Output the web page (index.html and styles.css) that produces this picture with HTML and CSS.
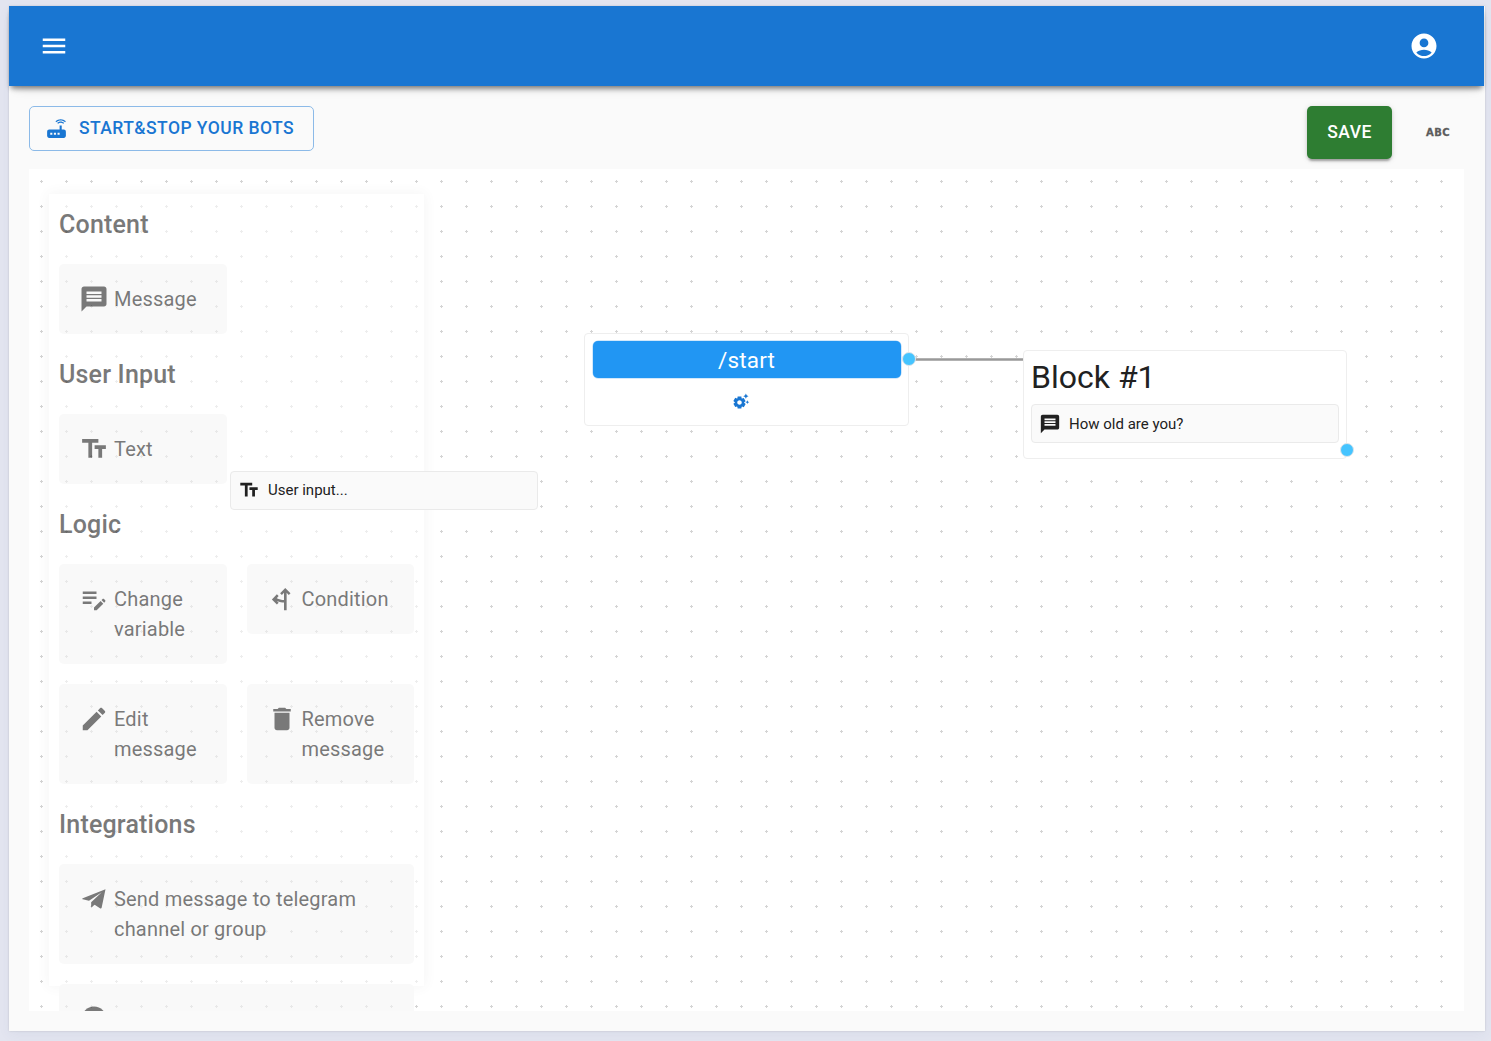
FILE: index.html
```html
<!DOCTYPE html>
<html lang="en">
<head>
<meta charset="utf-8">
<title>Bot editor</title>
<link rel="stylesheet" href="styles.css">
</head>
<body>
<svg class="sprite" aria-hidden="true">
  <symbol id="message" viewBox="0 0 24 24"><path d="M20 2H4c-1.1 0-1.99.9-1.99 2L2 22l4-4h14c1.1 0 2-.9 2-2V4c0-1.1-.9-2-2-2zm-2 12H6v-2h12v2zm0-3H6V9h12v2zm0-3H6V6h12v2z"/></symbol>
  <symbol id="text-fields" viewBox="0 0 24 24"><path d="M2.5 4v3h5v12h3V7h5V4h-13zm19 5h-9v3h3v7h3v-7h3V9z"/></symbol>
</svg>
<div class="window">
  <header class="appbar">
    <svg class="icon" viewBox="0 0 24 24"><path d="M3 18h18v-2H3v2zm0-5h18v-2H3v2zm0-7v2h18V6H3z"/></svg>
    <svg class="icon" viewBox="0 0 24 24"><path d="M12 2C6.48 2 2 6.48 2 12s4.48 10 10 10 10-4.48 10-10S17.52 2 12 2zm0 4c1.93 0 3.5 1.57 3.5 3.5S13.93 13 12 13s-3.5-1.57-3.5-3.5S10.07 6 12 6zm0 14c-2.03 0-4.43-.82-6.14-2.88C7.55 15.8 9.68 15 12 15s4.45.8 6.14 2.12C16.43 19.18 14.03 20 12 20z"/></svg>
  </header>
  <div class="toolbar">
    <button class="btn btn-outlined">
      <svg class="icon icon-btn" viewBox="0 0 24 24"><path d="M20.2 5.9l.8-.8C19.6 3.7 17.8 3 16 3s-3.6.7-5 2.1l.8.8C13 4.8 14.5 4.2 16 4.2s3 .6 4.2 1.7zm-.9.8c-.9-.9-2.1-1.4-3.3-1.4s-2.4.5-3.3 1.4l.8.8c.7-.7 1.6-1 2.5-1 .9 0 1.8.3 2.5 1l.8-.8zM19 13h-2V9h-2v4H5c-1.1 0-2 .9-2 2v4c0 1.1.9 2 2 2h14c1.1 0 2-.9 2-2v-4c0-1.1-.9-2-2-2zM8 18H6v-2h2v2zm3.5 0h-2v-2h2v2zm3.5 0h-2v-2h2v2z"/></svg>
      <span>START&amp;STOP YOUR BOTS</span>
    </button>
    <div class="actions">
      <button class="btn btn-save">SAVE</button>
      <span class="abc">ABC</span>
    </div>
  </div>
  <main class="canvas">
    <svg class="dots" width="100%" height="100%">
      <pattern id="grid" width="25" height="25" patternUnits="userSpaceOnUse"><path d="M11 12.5h3M12.5 11v3" stroke="#d4d4d4" stroke-width="1"/></pattern>
      <rect width="100%" height="100%" fill="url(#grid)"/>
    </svg>

    <aside class="palette">
      <h2>Content</h2>
      <div class="tiles">
        <div class="tile"><svg class="icon"><use href="#message"/></svg><span>Message</span></div>
      </div>
      <h2>User Input</h2>
      <div class="tiles">
        <div class="tile"><svg class="icon"><use href="#text-fields"/></svg><span>Text</span></div>
      </div>
      <h2>Logic</h2>
      <div class="tiles">
        <div class="tile"><svg class="icon" viewBox="0 0 24 24"><path d="M3 10h11v2H3v-2zm0-2h11V6H3v2zm0 8h7v-2H3v2zm15.01-3.13.71-.71c.39-.39 1.02-.39 1.41 0l.71.71c.39.39.39 1.02 0 1.41l-.71.71-2.12-2.12zm-.71.71-5.3 5.3V21h2.12l5.3-5.3-2.12-2.12z"/></svg><span>Change variable</span></div>
        <div class="tile"><svg class="icon" viewBox="0 0 24 24"><path d="M13.6 21V7l-1.7 1.7-1.400-1.400L14.600 3.200l4.200 4.100-1.400 1.400L15.700 7v14zM13.700 14.700c-1.500 0-3.700-.4-5.700-1.200l1.300 1.400-1.400 1.400L3.900 12.300 7.900 8.200l1.400 1.400-1.500 1.700c2 1 3.900 1.400 5.900 1.400z"/></svg><span>Condition</span></div>
        <div class="tile"><svg class="icon" viewBox="0 0 24 24"><path d="M3 17.250V21h3.750L17.810 9.940l-3.750-3.750L3 17.250zM20.710 7.040c.39-.39.39-1.020 0-1.410l-2.340-2.340c-.39-.39-1.020-.39-1.410 0l-1.830 1.830 3.750 3.750 1.830-1.830z"/></svg><span>Edit message</span></div>
        <div class="tile"><svg class="icon" viewBox="0 0 24 24"><path d="M6 19c0 1.100.9 2 2 2h8c1.100 0 2-.9 2-2V7H6v12zM19 4h-3.500l-1-1h-5l-1 1H5v2h14V4z"/></svg><span>Remove message</span></div>
      </div>
      <h2>Integrations</h2>
      <div class="tiles">
        <div class="tile wide"><svg class="icon" viewBox="0 0 24 24"><path d="M21.200 4.200 3 11.300c-.5.2-.5.7 0 .9l5 1.200 10.200-6.800-8.500 8 .1 4.200 2.700-2.300 4.600 3c.4.2.9 0 1-.5z"/></svg><span>Send message to telegram channel or group</span></div>
        <div class="tile wide"><svg class="icon" viewBox="0 0 24 24"><circle cx="12" cy="12" r="10"/></svg></div>
      </div>
    </aside>

    <svg class="edge" viewBox="0 0 116 3"><path d="M0 1.500h116"/></svg>

    <section class="node node-start">
      <div class="command">/start</div>
      <svg class="icon icon-gear" viewBox="0 0 24 24"><path d="M17.410 6.590 15 5.500l2.410-1.090L18.500 2l1.090 2.410L22 5.500l-2.410 1.090L18.500 9l-1.090-2.410zm3.870 6.130L20.500 11l-.78 1.720-1.720.78 1.720.78.78 1.720.78-1.720L23 13.500l-1.720-.78zm-5.040 1.650 1.940 1.470-2.500 4.330-2.240-.94c-.2.13-.42.26-.64.37l-.3 2.400h-5l-.3-2.410c-.22-.11-.43-.23-.64-.37l-2.240.94-2.500-4.330 1.940-1.470c-.01-.11-.01-.24-.01-.36s0-.25.01-.37l-1.940-1.470 2.500-4.330 2.240.94c.2-.13.42-.26.64-.37L7.500 6h5l.3 2.410c.22.11.43.23.64.37l2.240-.94 2.500 4.330-1.940 1.470c.01.12.01.24.01.37s0 .24-.01.36zM13 14c0-1.660-1.340-3-3-3s-3 1.340-3 3 1.340 3 3 3 3-1.340 3-3z"/></svg>
      <i class="handle"></i>
    </section>

    <section class="node node-block">
      <h3>Block #1</h3>
      <div class="element"><svg class="icon icon-small"><use href="#message"/></svg><span>How old are you?</span></div>
      <i class="handle"></i>
    </section>

    <div class="element dragged"><svg class="icon icon-small"><use href="#text-fields"/></svg><span>User input...</span></div>
  </main>
</div>
</body>
</html>
```
FILE: styles.css
```css
* { box-sizing: border-box; }

body {
  margin: 0;
  height: 1041px;
  padding: 6px 6px 10px 9px;
  overflow: hidden;
  background: #e3e5f0;
  font-family: Roboto, "Liberation Sans", sans-serif;
  color: #212121;
}

.sprite { position: absolute; width: 0; height: 0; }

.icon { width: 30px; height: 30px; flex: none; fill: currentColor; }

.window {
  height: 1025px;
  display: flex;
  flex-direction: column;
  background: #fafafa;
  box-shadow: 0 0 2px rgba(0, 0, 0, .14), 0 4px 12px rgba(60, 70, 120, .05);
}

.appbar {
  height: 80px;
  margin-right: 1px;
  flex: none;
  display: flex;
  align-items: center;
  justify-content: space-between;
  padding: 0 45px 0 30px;
  background: #1976d2;
  color: #fff;
  box-shadow: 0 4px 5px -2px rgba(0, 0, 0, .4), 0 6px 6px -3px rgba(0, 0, 0, .14), 0 7px 12px -6px rgba(0, 0, 0, .14);
}

.toolbar {
  flex: none;
  display: flex;
  justify-content: space-between;
  align-items: flex-start;
  padding: 20px 20px 10px;
}

.btn {
  display: flex;
  align-items: center;
  justify-content: center;
  border-radius: 5px;
  font: 500 17.5px/30px Roboto, "Liberation Sans", sans-serif;
  letter-spacing: .45px;
}

.btn-outlined {
  width: 285px;
  height: 45px;
  gap: 10px;
  padding: 0 5px 0 0;
  border: 1px solid #8cbae8;
  background: transparent;
  color: #1976d2;
}

.btn-outlined span { padding-bottom: 2px; }

.icon-btn { width: 25px; height: 25px; }

.actions { display: flex; align-items: center; gap: 34px; }

.btn-save {
  width: 85px;
  height: 53px;
  padding: 0 0 2px;
  border: 0;
  background: #2e7d32;
  color: #fff;
  box-shadow: 0 4px 2px -2px rgba(0, 0, 0, .2), 0 2px 3px rgba(0, 0, 0, .14), 0 1px 6px rgba(0, 0, 0, .12);
}

.abc {
  width: 39px;
  padding-top: 1px;
  font: bold 10px/12px "DejaVu Sans", sans-serif;
  letter-spacing: .5px;
  color: #5c5c5c;
  -webkit-text-stroke: .3px #5c5c5c;
}

.canvas {
  position: relative;
  width: 1435px;
  height: 842px;
  margin-left: 20px;
  overflow: hidden;
  background: #fff;
}

.dots { position: absolute; inset: 0; }

.palette {
  position: absolute;
  left: 20px;
  top: 25px;
  width: 375px;
  height: 792px;
  padding: 10px;
  display: flex;
  flex-direction: column;
  gap: 20px;
  background: #fff;
  opacity: .6;
  box-shadow: 0 0 12px rgba(0, 0, 0, .07);
}

.palette h2 {
  margin: 0;
  padding-top: 2px;
  flex: none;
  font-size: 25px;
  font-weight: 500;
  line-height: 38px;
  letter-spacing: .19px;
}

.tiles {
  display: grid;
  grid-template-columns: 1fr 1fr;
  align-items: start;
  gap: 20px;
}

.tile {
  display: flex;
  align-items: flex-start;
  gap: 5px;
  min-height: 70px;
  padding: 20px;
  border-radius: 5px;
  background: #f6f6f6;
  font-size: 20px;
  line-height: 30px;
  letter-spacing: .19px;
}

.wide { grid-column: span 2; }

.edge {
  position: absolute;
  left: 879px;
  top: 189px;
  width: 116px;
  height: 3px;
}

.edge path { stroke: #999; stroke-width: 2.500px; }

.node {
  position: absolute;
  padding: 7px;
  border: 1px solid #eee;
  border-radius: 4px;
  background: #fff;
}

.node-start {
  left: 555px;
  top: 164px;
  width: 325px;
  height: 93px;
  display: flex;
  flex-direction: column;
  align-items: center;
}

.command {
  width: 308px;
  height: 37px;
  border-radius: 5px;
  background: #2196f3;
  box-shadow: 0 0 0 .5px #a6d2f8;
  color: #fff;
  font-size: 22.500px;
  line-height: 38px;
  letter-spacing: .15px;
  text-align: center;
}

.icon-gear { width: 18px; height: 18px; margin: 14px 11px 0 0; color: #1976d2; }

.node-block { left: 994px; top: 181px; width: 324px; height: 109px; }

.node-block h3 {
  margin: -1px 0 7px;
  font-size: 32px;
  font-weight: 400;
  line-height: 40px;
  letter-spacing: 0;
}

.handle {
  position: absolute;
  width: 14px;
  height: 14px;
  border: 1px solid #dde4ea;
  border-radius: 50%;
  background: #45c4ff;
}

.node-start .handle { right: -7.500px; top: 18px; }
.node-block .handle { right: -8px; top: 92px; }

.element {
  width: 308px;
  height: 39px;
  display: flex;
  align-items: center;
  gap: 8px;
  padding: 0 7px;
  border: 1px solid #eaeaea;
  border-radius: 4px;
  background: #fafafa;
  font-size: 15px;
}

.icon-small { width: 22px; height: 22px; }

.dragged {
  position: absolute;
  left: 201px;
  top: 302px;
  padding-bottom: 2px;
}
```
